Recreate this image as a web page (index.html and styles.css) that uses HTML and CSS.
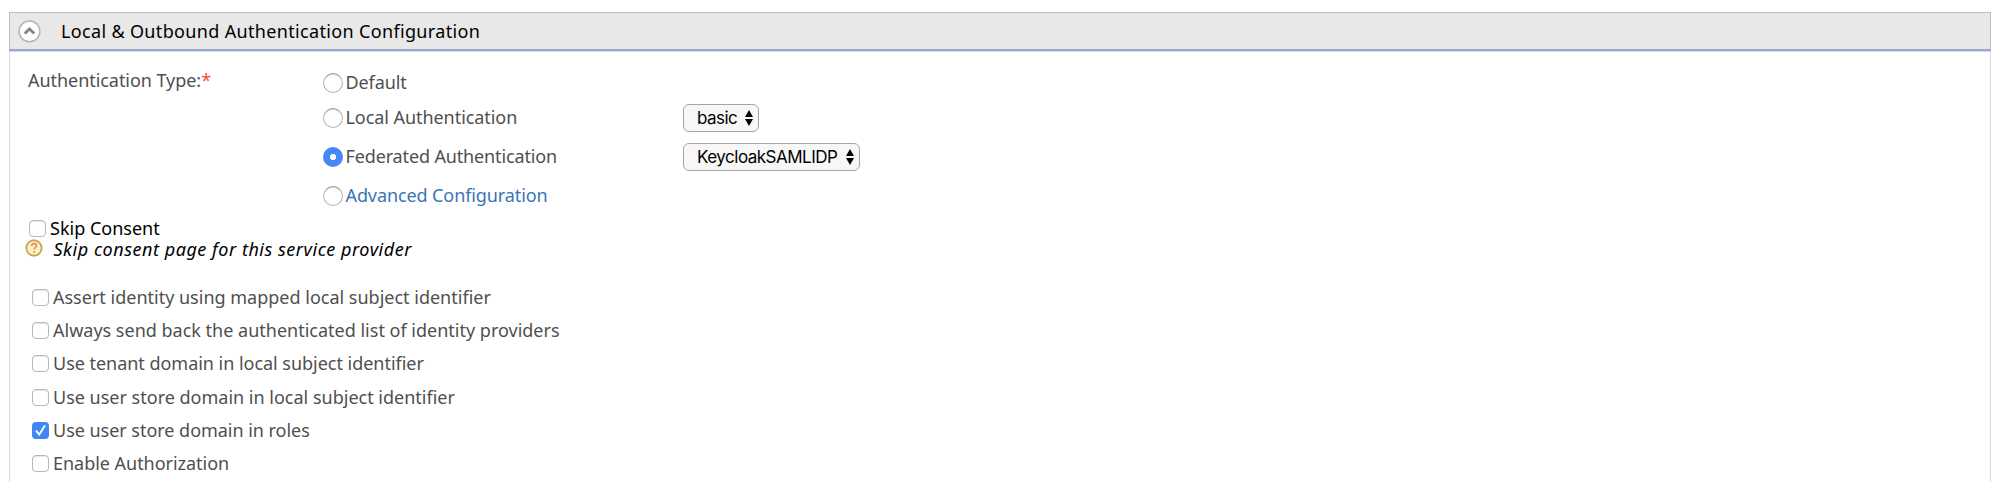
FILE: index.html
```html
<!DOCTYPE html>
<html lang="en">
<head>
<meta charset="utf-8">
<title>Service Provider</title>
<link rel="stylesheet" href="styles.css">
</head>
<body>
<section class="panel">
  <h2 class="panel-header">
    <svg class="toggle" viewBox="0 0 24 24"><circle cx="12" cy="12.4" r="10.8" fill="#fff" stroke="#b5b5b5" stroke-width="1.6"/><path d="M7 14.6l5-4.8 5 4.8" fill="none" stroke="#858585" stroke-width="3"/></svg>
    <span class="t-head">Local &amp; Outbound Authentication Configuration</span>
  </h2>
  <div class="panel-body">
    <div class="auth">
      <div class="auth-label"><span>Authentication Type:</span><span class="required">*</span></div>
      <div class="options">
        <label class="option first"><i class="radio"></i><span class="t-default">Default</span></label>
        <label class="option"><i class="radio"></i><span class="t-local">Local Authentication</span></label>
        <label class="option"><i class="radio on"></i><span class="t-fed">Federated Authentication</span></label>
        <label class="option"><i class="radio"></i><a class="t-adv">Advanced Configuration</a></label>
      </div>
      <div class="selects">
        <div class="select short"><span>basic</span><svg viewBox="0 0 8 16"><path d="M4 0l4 7H0zM4 16l4-7H0z"/></svg></div>
        <div class="select long"><span>KeycloakSAMLIDP</span><svg viewBox="0 0 8 16"><path d="M4 0l4 7H0zM4 16l4-7H0z"/></svg></div>
      </div>
    </div>
    <label class="consent"><i class="check"></i><span>Skip Consent</span></label>
    <div class="help">
      <svg viewBox="0 0 18 18"><circle cx="9" cy="9" r="7.7" fill="#fbf0c8" stroke="#c9a75a" stroke-width="1.9"/><path d="M6.6 7.1c0-3.4 5-3.3 5-.5 0 1.8-2.4 1.8-2.4 4" fill="none" stroke="#e59a4c" stroke-width="1.8"/><circle cx="9.2" cy="13" r="1.1" fill="#e59a4c"/></svg>
      <em class="t-help">Skip consent page for this service provider</em>
    </div>
    <div class="checks">
      <label><i class="check"></i><span>Assert identity using mapped local subject identifier</span></label>
      <label><i class="check"></i><span>Always send back the authenticated list of identity providers</span></label>
      <label><i class="check"></i><span class="t-tight">Use tenant domain in local subject identifier</span></label>
      <label><i class="check"></i><span>Use user store domain in local subject identifier</span></label>
      <label><i class="check on"><svg viewBox="0 0 17 17"><path d="M4.5 9.2l2.7 3.5L12.6 4" fill="none" stroke="#fff" stroke-width="1.9" stroke-linecap="round"/></svg></i><span class="t-tight">Use user store domain in roles</span></label>
      <label><i class="check"></i><span class="t-tight">Enable Authorization</span></label>
    </div>
  </div>
</section>
</body>
</html>
```
FILE: styles.css
```css
* { box-sizing: border-box; }
body {
  margin: 0;
  height: 482px;
  padding: 12px 9px 0;
  overflow: hidden;
  background: #fff;
  color: #4f4f4f;
  font: 18px/24px "Noto Sans", sans-serif;
  white-space: nowrap;
}
.panel { height: 470px; }
.panel-header {
  display: flex;
  height: 39px;
  margin: 0;
  padding: 6px 0 0 8px;
  gap: 20px;
  background: #e8e8e8;
  border: 1px solid #bdbdbf;
  border-bottom: 2px solid #98a8c8;
  box-shadow: 0 1px 0 #d5dbe6;
  color: #000;
  font-size: 18px;
  font-weight: 400;
}
.toggle { width: 23px; height: 24px; flex: none; }
.panel-body {
  height: 431px;
  padding: 16px 0 0 15px;
  border: solid #d9d9d9;
  border-width: 0 1px;
}
.auth { display: grid; grid-template-columns: 298px 360px auto; height: 148px; }
.auth-label { padding: 1px 0 0 3px; letter-spacing: -.05px; }
.required { color: #f0503c; }
.options { padding-top: 3px; }
.option { display: flex; gap: 2.5px; height: 39px; }
.option.first { height: 35px; }
.option a { color: #3a74b8; }
.t-head { letter-spacing: .34px; }
.t-default { letter-spacing: -.1px; }
.t-local { letter-spacing: -.06px; }
.t-fed { letter-spacing: -.14px; }
.t-adv { letter-spacing: -.1px; }
.t-help { letter-spacing: .53px; }
.t-tight { letter-spacing: -.03px; }
.radio {
  width: 20px;
  height: 20px;
  margin-top: 3px;
  flex: none;
  border: 1px solid #b4b4b4;
  border-top-color: #999;
  border-radius: 50%;
  background: #fff;
  box-shadow: inset 0 1px 1px #e2e2e2;
}
.radio.on {
  border: 0;
  background: radial-gradient(circle, #fff 2.8px, #4587f5 3.5px);
  box-shadow: none;
}
.selects { display: grid; align-content: start; justify-items: start; gap: 11px; padding-top: 37px; }
.select {
  display: flex;
  align-items: center;
  justify-content: space-between;
  height: 28px;
  padding: 0 5px 0 13px;
  border: 1px solid #a5a5a5;
  border-radius: 6px;
  background: #f7f7f7;
  color: #000;
  font: 17px/26px Inter, sans-serif;
}
.select svg { width: 8px; height: 16px; }
.short { width: 76px; }
.long { width: 177px; }
.short span { letter-spacing: -.55px; }
.long span { letter-spacing: -.5px; }
.consent { display: flex; gap: 4px; padding: 1px 0 0 4px; height: 22px; color: #000; }
.check {
  width: 17px;
  height: 17px;
  margin-top: 4px;
  flex: none;
  border: 1px solid #b8b8b8;
  border-radius: 4px;
  background: #fff;
  box-shadow: inset 0 1px 1px #e6e6e6;
}
.check.on { border: 0; background: #4285f4; box-shadow: none; }
.check svg { display: block; }
.help { display: flex; gap: 11px; color: #000; height: 48px; }
.help svg { width: 18px; height: 18px; margin: 2px 0 0 -.5px; }
.checks { padding: .2px 0 0 7px; }
.checks label { display: flex; gap: 4px; height: 33.15px; }
```
